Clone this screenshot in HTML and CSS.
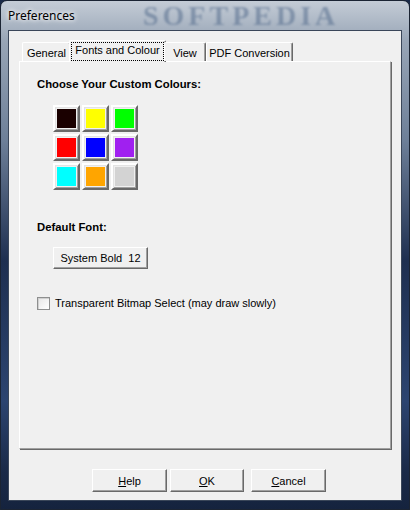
FILE: index.html
```html
<!DOCTYPE html>
<html lang="en">
<head>
    <meta charset="UTF-8">
    <title>Preferences</title>
    <link rel="stylesheet" href="styles.css">
</head>
<body>
    <div class="window">
        <div class="titlebar">
            <span class="title">Preferences</span>
            <span class="mark">SOFTPEDIA</span>
        </div>
        <div class="client">
            <ul class="tabs">
                <li class="tab t-general">General</li>
                <li class="tab t-fonts active"><span class="focus">Fonts and Colour</span></li>
                <li class="tab t-view">View</li>
                <li class="tab t-pdf">PDF Conversion</li>
            </ul>
            <div class="panel">
                <h2>Choose Your Custom Colours:</h2>
                <div class="swatches">
                    <span class="swatch"><i style="background:#1a0000"></i></span>
                    <span class="swatch"><i style="background:#ffff00"></i></span>
                    <span class="swatch"><i style="background:#00ff00"></i></span>
                    <span class="swatch"><i style="background:#ff0000"></i></span>
                    <span class="swatch"><i style="background:#0000ff"></i></span>
                    <span class="swatch"><i style="background:#a020f0"></i></span>
                    <span class="swatch"><i style="background:#00ffff"></i></span>
                    <span class="swatch"><i style="background:#ffa500"></i></span>
                    <span class="swatch"><i style="background:#d3d3d3"></i></span>
                </div>
                <h2 class="font-head">Default Font:</h2>
                <div class="btn font-btn">System Bold&nbsp;&nbsp;12</div>
                <label class="check"><span class="box"></span>Transparent Bitmap Select (may draw slowly)</label>
            </div>
            <div class="buttons">
                <div class="btn"><u>H</u>elp</div>
                <div class="btn ok"><u>O</u>K</div>
                <div class="btn cancel"><u>C</u>ancel</div>
            </div>
        </div>
    </div>
</body>
</html>
```

FILE: styles.css
```css
* { margin: 0; padding: 0; box-sizing: border-box; }
html, body { width: 410px; height: 510px; background: #1a2a48; overflow: hidden; }
body { font-family: "Liberation Sans", Arial, sans-serif; font-size: 11px; color: #000; }

.window { width: 410px; height: 510px; display: flex; flex-direction: column; border: 1px solid #1b2433; border-radius: 7px 7px 0 0;
    background: linear-gradient(to bottom, #c4ccd6 0, #98a5b6 40px, #6d7f98 140px, #1e2f50 260px, #2c4470 400px, #1a2a48 470px, #15233e 100%); }

.titlebar { height: 29px; position: relative; display: flex; align-items: center; padding-left: 7px; }
.title { font-family: "Noto Sans", "Liberation Sans", sans-serif; font-size: 12px; position: relative; z-index: 2; text-shadow: 0 0 6px #fff, 0 0 4px #fff; }
.mark { position: absolute; left: 142px; top: 0; font-family: "Liberation Serif", serif; font-weight: bold; font-size: 28px; line-height: 30px; letter-spacing: 4px; color: #4d6688; opacity: 0.5; filter: blur(0.8px); }

.client { flex: 1; margin: 0 7px 8px 7px; background: #f0f0f0; border: 1px solid #3a4659; padding: 9px 10px 0 10px; }

.tabs { list-style: none; display: flex; align-items: flex-end; height: 21px; padding-left: 3px; position: relative; z-index: 2; }
.tab { height: 19px; background: #f0f0f0; border: 1px solid #fff; border-right: 1px solid #696969; border-bottom: none; border-radius: 2px 2px 0 0; box-shadow: inset -1px 0 0 #a0a0a0; text-align: center; line-height: 19px; padding-top: 1px; }
.t-general { width: 49px; }
.t-fonts { width: 97px; margin: 0 -2px; }
.t-view { width: 42px; }
.t-pdf { width: 87px; }
.tab.active { height: 22px; margin-bottom: -1px; padding: 1px 1px 0 1px; line-height: 15px; }
.focus { display: block; border: 1px dotted #000; height: 19px; }

.panel { height: 388px; border: 1px solid #fff; border-right-color: #a0a0a0; border-bottom-color: #a0a0a0; box-shadow: 1px 1px 0 #696969; padding: 15px 0 0 17px; }
.panel h2 { font-size: 11.3px; font-weight: bold; line-height: 14px; }

.swatches { display: grid; grid-template-columns: repeat(3, 27px); grid-auto-rows: 27px; gap: 2px; margin: 14px 0 0 16px; }
.swatch { border: 2px solid; border-color: #fff #696969 #696969 #fff; box-shadow: inset 1px 1px 0 #e3e3e3, inset -1px -1px 0 #a0a0a0; background: #f0f0f0; padding: 2px; }
.swatch i { display: block; width: 19px; height: 19px; }

.font-head { margin-top: 30px; }

.btn { height: 23px; border: 1px solid; border-color: #fff #696969 #696969 #fff; box-shadow: inset -1px -1px 0 #a0a0a0; background: #f0f0f0; display: flex; align-items: center; justify-content: center; font-size: 11px; }
.font-btn { width: 95px; margin: 13px 0 0 16px; height: 22px; }

.check { display: flex; align-items: center; margin-top: 27px; font-size: 11px; height: 14px; }
.box { width: 13px; height: 13px; margin-right: 5px; border: 1px solid #8e8f8f; background: linear-gradient(135deg, #e6e6e6, #fff); box-shadow: inset 1px 1px 0 #d0d0d0; }

.buttons { display: flex; margin-top: 20px; padding-left: 73px; }
.buttons .btn { width: 75px; }
.buttons .ok { width: 74px; margin-left: 3px; }
.buttons .cancel { margin-left: 7px; }
```
